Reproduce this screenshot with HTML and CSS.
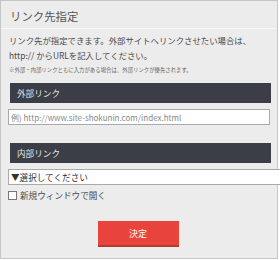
FILE: index.html
```html
<!DOCTYPE html>
<html lang="ja">
<head>
  <meta charset="UTF-8" />
  <title>リンク先指定</title>
  <link rel="stylesheet" href="styles.css">
</head>
<body>

<div class="panel">
  <div class="title">リンク先指定</div>

  <div class="desc">
    <p>リンク先が指定できます。外部サイトへリンクさせたい場合は、<br>http:// からURLを記入してください。</p>
    <p class="note">※外部・内部リンクともに入力がある場合は、外部リンクが優先されます。</p>
  </div>

  <div class="sec-head">外部リンク</div>
  <input type="text" class="url-input" placeholder="例) http://www.site-shokunin.com/index.html" />

  <div class="sec-head sec-inner">内部リンク</div>
  <div class="select">▼選択してください</div>
  <label class="check"><span class="box"></span>新規ウィンドウで開く</label>

  <div class="actions">
    <button class="submit">決定</button>
  </div>
</div>

</body>
</html>
```

FILE: styles.css
```css
body {
  margin: 0; background: #fff;
  font-family: "Noto Sans CJK JP", "Liberation Sans", sans-serif;
  color: #4a4a4a;
}
.panel {
  width: 278px; height: 259px; box-sizing: border-box;
  background: #ececec; border: 1px solid #c6c6c6;
}
.title {
  height: 28px; box-sizing: border-box;
  padding: 8px 9px 0; font-size: 11.4px; line-height: 14px;
  border-bottom: 1px solid #f7f7f7; color: #555;
}
.desc { padding: 0 8px; }
.desc p { margin: 0; font-size: 8.4px; line-height: 15px; white-space: nowrap; }
.desc p:first-child { margin-top: 4px; }
.desc .note {
  font-size: 5.4px; line-height: 9px; margin-top: 3px; color: #666;
}

.sec-head {
  margin: 8px 6px 0 9px; height: 20px;
  background: #3b3e46; color: #e6e6e6;
  font-size: 8.6px; line-height: 20px; padding-left: 7px;
}
.sec-inner { margin-top: 18px; }
.url-input {
  display: block; margin: 6px 0 0 7px; width: 262px; height: 16px;
  box-sizing: border-box; border: 1px solid #aaa; background: #fff;
  padding: 0 2px; font-family: inherit; font-size: 8px;
}
.url-input::placeholder { color: #888; }
.select {
  margin: 6px 0 0 7px; width: 272px; height: 16px; box-sizing: border-box;
  background: #fff; border: 1px solid #aaa; border-right: none;
  font-size: 8.6px; line-height: 14px; padding-left: 2px; color: #333;
}
.check {
  display: flex; align-items: center; gap: 3px;
  margin: 4px 0 0 7px; font-size: 8.6px; line-height: 12px;
}
.box {
  width: 7px; height: 7px; border: 1px solid #777; background: #fff;
}
.actions { display: flex; justify-content: center; margin-top: 20px; padding-right: 2px; }
.submit {
  width: 81px; height: 26px; border: none; border-bottom: 2px solid #b63a33;
  background: #e8443b; color: #fff; font-family: inherit; font-size: 9px;
}
```
